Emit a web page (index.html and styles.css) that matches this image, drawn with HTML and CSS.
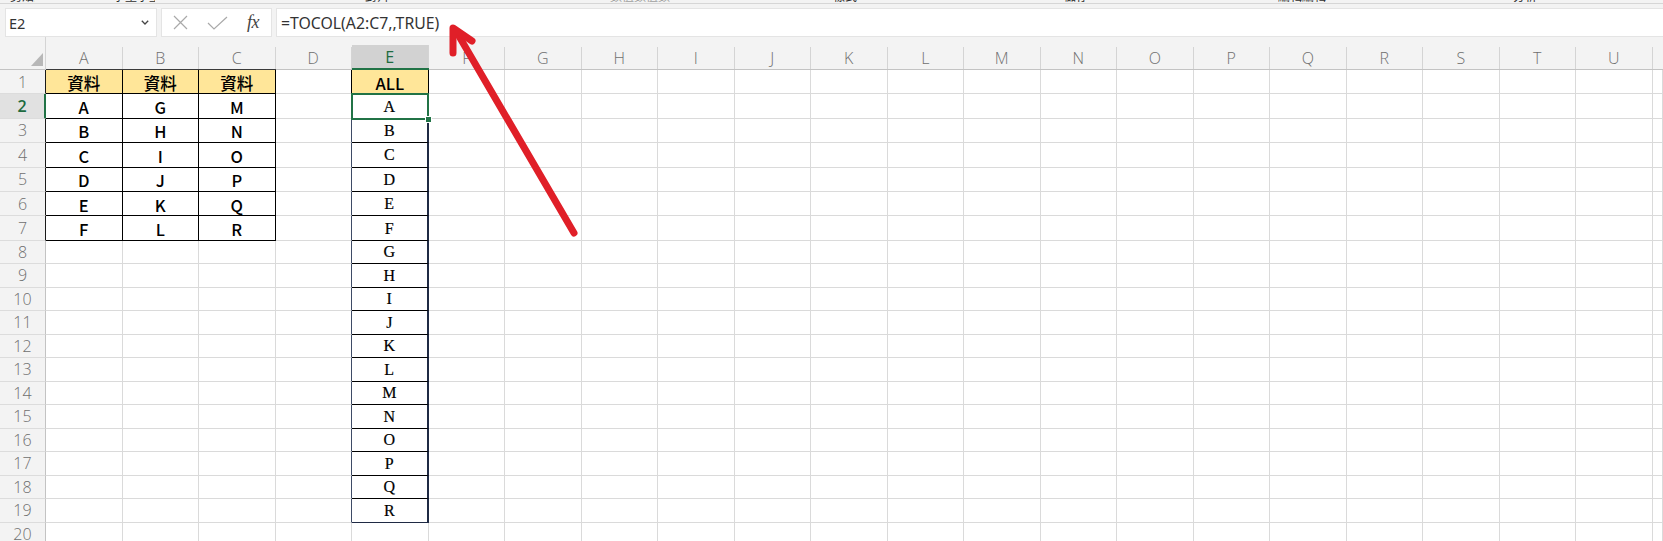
FILE: index.html
```html
<!DOCTYPE html>
<html lang="zh-Hant">
<head>
<meta charset="utf-8">
<title>TOCOL</title>
<link rel="stylesheet" href="styles.css">
</head>
<body>
<div class="app">
  <div class="ribbon">
    <span class="rg g1">剪貼簿</span>
    <span class="rg g2">字型字型</span>
    <span class="rg g3">對齊</span>
    <span class="rg g4 dim">數值數值數值</span>
    <span class="rg g5">樣式</span>
    <span class="rg g6">儲存</span>
    <span class="rg g7">編輯編輯</span>
    <span class="rg g8">分析</span>
  </div>
  <div class="fbar">
    <div class="namebox">
      <span>E2</span>
      <svg class="chev" width="8" height="5" viewBox="0 0 8 5"><path d="M0.8 0.8 L4 4 L7.2 0.8" fill="none" stroke="#444" stroke-width="1.3"/></svg>
    </div>
    <div class="fxbox">
      <svg class="ic" width="15" height="15" viewBox="0 0 15 15"><path d="M1 1 L14 14 M14 1 L1 14" stroke="#a9a9a9" stroke-width="1.2" fill="none"/></svg>
      <svg class="ic ok" width="21" height="14" viewBox="0 0 21 14"><path d="M1 7 L7 13 L20 1" stroke="#a9a9a9" stroke-width="1.2" fill="none"/></svg>
      <span class="fx">fx</span>
    </div>
    <div class="formula">=TOCOL(A2:C7,,TRUE)</div>
  </div>

  <div class="sheet">
    <div class="corner"><span class="tri"></span></div>
    <div class="ch tb"><span>A</span></div>
    <div class="ch tb"><span>B</span></div>
    <div class="ch tb"><span>C</span></div>
    <div class="ch"><span>D</span></div>
    <div class="ch act"><span>E</span></div>
    <div class="ch"><span>F</span></div>
    <div class="ch"><span>G</span></div>
    <div class="ch"><span>H</span></div>
    <div class="ch"><span>I</span></div>
    <div class="ch"><span>J</span></div>
    <div class="ch"><span>K</span></div>
    <div class="ch"><span>L</span></div>
    <div class="ch"><span>M</span></div>
    <div class="ch"><span>N</span></div>
    <div class="ch"><span>O</span></div>
    <div class="ch"><span>P</span></div>
    <div class="ch"><span>Q</span></div>
    <div class="ch"><span>R</span></div>
    <div class="ch"><span>S</span></div>
    <div class="ch"><span>T</span></div>
    <div class="ch"><span>U</span></div>
    <div class="ch last"><span></span></div>

    <!-- row 1 -->
    <div class="rh edge">1</div>
    <div class="c t y sa">資料</div><div class="c t y sa">資料</div><div class="c t y sa">資料</div>
    <div class="c bk"></div>
    <div class="c e1 y sa">ALL</div>
    <div class="c"></div><div class="c"></div><div class="c"></div><div class="c"></div><div class="c"></div><div class="c"></div><div class="c"></div><div class="c"></div><div class="c"></div><div class="c"></div><div class="c"></div><div class="c"></div><div class="c"></div><div class="c"></div><div class="c"></div><div class="c"></div><div class="c"></div>

    <!-- row 2 -->
    <div class="rh act">2</div>
    <div class="c t sa">A</div><div class="c t sa">G</div><div class="c t sa">M</div>
    <div class="c"></div>
    <div class="c e sel ser">A</div>
    <div class="c"></div><div class="c"></div><div class="c"></div><div class="c"></div><div class="c"></div><div class="c"></div><div class="c"></div><div class="c"></div><div class="c"></div><div class="c"></div><div class="c"></div><div class="c"></div><div class="c"></div><div class="c"></div><div class="c"></div><div class="c"></div><div class="c"></div>

    <!-- row 3 -->
    <div class="rh edge">3</div>
    <div class="c t sa">B</div><div class="c t sa">H</div><div class="c t sa">N</div>
    <div class="c sp"></div>
    <div class="c e ser">B</div>
    <div class="c"></div><div class="c"></div><div class="c"></div><div class="c"></div><div class="c"></div><div class="c"></div><div class="c"></div><div class="c"></div><div class="c"></div><div class="c"></div><div class="c"></div><div class="c"></div><div class="c"></div><div class="c"></div><div class="c"></div><div class="c"></div><div class="c"></div>

    <!-- row 4 -->
    <div class="rh edge">4</div>
    <div class="c t sa">C</div><div class="c t sa">I</div><div class="c t sa">O</div>
    <div class="c sp"></div>
    <div class="c e ser">C</div>
    <div class="c"></div><div class="c"></div><div class="c"></div><div class="c"></div><div class="c"></div><div class="c"></div><div class="c"></div><div class="c"></div><div class="c"></div><div class="c"></div><div class="c"></div><div class="c"></div><div class="c"></div><div class="c"></div><div class="c"></div><div class="c"></div><div class="c"></div>

    <!-- row 5 -->
    <div class="rh edge">5</div>
    <div class="c t sa">D</div><div class="c t sa">J</div><div class="c t sa">P</div>
    <div class="c sp"></div>
    <div class="c e ser">D</div>
    <div class="c"></div><div class="c"></div><div class="c"></div><div class="c"></div><div class="c"></div><div class="c"></div><div class="c"></div><div class="c"></div><div class="c"></div><div class="c"></div><div class="c"></div><div class="c"></div><div class="c"></div><div class="c"></div><div class="c"></div><div class="c"></div><div class="c"></div>

    <!-- row 6 -->
    <div class="rh edge">6</div>
    <div class="c t sa">E</div><div class="c t sa">K</div><div class="c t sa">Q</div>
    <div class="c sp"></div>
    <div class="c e ser">E</div>
    <div class="c"></div><div class="c"></div><div class="c"></div><div class="c"></div><div class="c"></div><div class="c"></div><div class="c"></div><div class="c"></div><div class="c"></div><div class="c"></div><div class="c"></div><div class="c"></div><div class="c"></div><div class="c"></div><div class="c"></div><div class="c"></div><div class="c"></div>

    <!-- row 7 -->
    <div class="rh edge">7</div>
    <div class="c t sa">F</div><div class="c t sa">L</div><div class="c t sa">R</div>
    <div class="c sp"></div>
    <div class="c e ser">F</div>
    <div class="c"></div><div class="c"></div><div class="c"></div><div class="c"></div><div class="c"></div><div class="c"></div><div class="c"></div><div class="c"></div><div class="c"></div><div class="c"></div><div class="c"></div><div class="c"></div><div class="c"></div><div class="c"></div><div class="c"></div><div class="c"></div><div class="c"></div>

    <!-- row 8 -->
    <div class="rh">8</div>
    <div class="c"></div><div class="c"></div><div class="c"></div>
    <div class="c sp"></div>
    <div class="c e ser">G</div>
    <div class="c"></div><div class="c"></div><div class="c"></div><div class="c"></div><div class="c"></div><div class="c"></div><div class="c"></div><div class="c"></div><div class="c"></div><div class="c"></div><div class="c"></div><div class="c"></div><div class="c"></div><div class="c"></div><div class="c"></div><div class="c"></div><div class="c"></div>

    <!-- row 9 -->
    <div class="rh">9</div>
    <div class="c"></div><div class="c"></div><div class="c"></div>
    <div class="c sp"></div>
    <div class="c e ser">H</div>
    <div class="c"></div><div class="c"></div><div class="c"></div><div class="c"></div><div class="c"></div><div class="c"></div><div class="c"></div><div class="c"></div><div class="c"></div><div class="c"></div><div class="c"></div><div class="c"></div><div class="c"></div><div class="c"></div><div class="c"></div><div class="c"></div><div class="c"></div>

    <!-- row 10 -->
    <div class="rh">10</div>
    <div class="c"></div><div class="c"></div><div class="c"></div>
    <div class="c sp"></div>
    <div class="c e ser">I</div>
    <div class="c"></div><div class="c"></div><div class="c"></div><div class="c"></div><div class="c"></div><div class="c"></div><div class="c"></div><div class="c"></div><div class="c"></div><div class="c"></div><div class="c"></div><div class="c"></div><div class="c"></div><div class="c"></div><div class="c"></div><div class="c"></div><div class="c"></div>

    <!-- row 11 -->
    <div class="rh">11</div>
    <div class="c"></div><div class="c"></div><div class="c"></div>
    <div class="c sp"></div>
    <div class="c e ser">J</div>
    <div class="c"></div><div class="c"></div><div class="c"></div><div class="c"></div><div class="c"></div><div class="c"></div><div class="c"></div><div class="c"></div><div class="c"></div><div class="c"></div><div class="c"></div><div class="c"></div><div class="c"></div><div class="c"></div><div class="c"></div><div class="c"></div><div class="c"></div>

    <!-- row 12 -->
    <div class="rh">12</div>
    <div class="c"></div><div class="c"></div><div class="c"></div>
    <div class="c sp"></div>
    <div class="c e ser">K</div>
    <div class="c"></div><div class="c"></div><div class="c"></div><div class="c"></div><div class="c"></div><div class="c"></div><div class="c"></div><div class="c"></div><div class="c"></div><div class="c"></div><div class="c"></div><div class="c"></div><div class="c"></div><div class="c"></div><div class="c"></div><div class="c"></div><div class="c"></div>

    <!-- row 13 -->
    <div class="rh">13</div>
    <div class="c"></div><div class="c"></div><div class="c"></div>
    <div class="c sp"></div>
    <div class="c e ser">L</div>
    <div class="c"></div><div class="c"></div><div class="c"></div><div class="c"></div><div class="c"></div><div class="c"></div><div class="c"></div><div class="c"></div><div class="c"></div><div class="c"></div><div class="c"></div><div class="c"></div><div class="c"></div><div class="c"></div><div class="c"></div><div class="c"></div><div class="c"></div>

    <!-- row 14 -->
    <div class="rh">14</div>
    <div class="c"></div><div class="c"></div><div class="c"></div>
    <div class="c sp"></div>
    <div class="c e ser">M</div>
    <div class="c"></div><div class="c"></div><div class="c"></div><div class="c"></div><div class="c"></div><div class="c"></div><div class="c"></div><div class="c"></div><div class="c"></div><div class="c"></div><div class="c"></div><div class="c"></div><div class="c"></div><div class="c"></div><div class="c"></div><div class="c"></div><div class="c"></div>

    <!-- row 15 -->
    <div class="rh">15</div>
    <div class="c"></div><div class="c"></div><div class="c"></div>
    <div class="c sp"></div>
    <div class="c e ser">N</div>
    <div class="c"></div><div class="c"></div><div class="c"></div><div class="c"></div><div class="c"></div><div class="c"></div><div class="c"></div><div class="c"></div><div class="c"></div><div class="c"></div><div class="c"></div><div class="c"></div><div class="c"></div><div class="c"></div><div class="c"></div><div class="c"></div><div class="c"></div>

    <!-- row 16 -->
    <div class="rh">16</div>
    <div class="c"></div><div class="c"></div><div class="c"></div>
    <div class="c sp"></div>
    <div class="c e ser">O</div>
    <div class="c"></div><div class="c"></div><div class="c"></div><div class="c"></div><div class="c"></div><div class="c"></div><div class="c"></div><div class="c"></div><div class="c"></div><div class="c"></div><div class="c"></div><div class="c"></div><div class="c"></div><div class="c"></div><div class="c"></div><div class="c"></div><div class="c"></div>

    <!-- row 17 -->
    <div class="rh">17</div>
    <div class="c"></div><div class="c"></div><div class="c"></div>
    <div class="c sp"></div>
    <div class="c e ser">P</div>
    <div class="c"></div><div class="c"></div><div class="c"></div><div class="c"></div><div class="c"></div><div class="c"></div><div class="c"></div><div class="c"></div><div class="c"></div><div class="c"></div><div class="c"></div><div class="c"></div><div class="c"></div><div class="c"></div><div class="c"></div><div class="c"></div><div class="c"></div>

    <!-- row 18 -->
    <div class="rh">18</div>
    <div class="c"></div><div class="c"></div><div class="c"></div>
    <div class="c sp"></div>
    <div class="c e ser">Q</div>
    <div class="c"></div><div class="c"></div><div class="c"></div><div class="c"></div><div class="c"></div><div class="c"></div><div class="c"></div><div class="c"></div><div class="c"></div><div class="c"></div><div class="c"></div><div class="c"></div><div class="c"></div><div class="c"></div><div class="c"></div><div class="c"></div><div class="c"></div>

    <!-- row 19 -->
    <div class="rh">19</div>
    <div class="c"></div><div class="c"></div><div class="c"></div>
    <div class="c sp"></div>
    <div class="c e end ser">R</div>
    <div class="c"></div><div class="c"></div><div class="c"></div><div class="c"></div><div class="c"></div><div class="c"></div><div class="c"></div><div class="c"></div><div class="c"></div><div class="c"></div><div class="c"></div><div class="c"></div><div class="c"></div><div class="c"></div><div class="c"></div><div class="c"></div><div class="c"></div>

    <!-- row 20 -->
    <div class="rh">20</div>
    <div class="c"></div><div class="c"></div><div class="c"></div><div class="c"></div><div class="c"></div>
    <div class="c"></div><div class="c"></div><div class="c"></div><div class="c"></div><div class="c"></div><div class="c"></div><div class="c"></div><div class="c"></div><div class="c"></div><div class="c"></div><div class="c"></div><div class="c"></div><div class="c"></div><div class="c"></div><div class="c"></div><div class="c"></div><div class="c"></div>
  </div>

  <svg class="arrow" width="1663" height="541" viewBox="0 0 1663 541">
    <g stroke="#e01f28" stroke-width="7" stroke-linecap="round" stroke-linejoin="round" fill="none">
      <path d="M574 233 L456 31"/>
      <path d="M453 53 L453 28 L472 41"/>
    </g>
  </svg>
</div>
</body>
</html>
```

FILE: styles.css
```css
html, body {
  margin: 0;
  padding: 0;
  background: #fff;
}

.app {
  position: relative;
  width: 1663px;
  height: 541px;
  overflow: hidden;
  background: #fff;
  font-family: "Noto Sans", "Open Sans", sans-serif;
}

/* ribbon remnant at the very top */
.ribbon {
  height: 3px;
  background: #f3f3f3;
  border-bottom: 1px solid #d6d6d6;
  display: flex;
  overflow: hidden;
}
.rg {
  flex: none;
  height: 14px;
  margin-top: -11px;
  font-family: "Noto Sans CJK TC", sans-serif;
  font-size: 12px;
  line-height: 14px;
  white-space: nowrap;
  overflow: hidden;
  color: #2e2e2e;
}
.rg.dim { color: #a0a0a0; }
.g1 { margin-left: 10px; width: 25px; }
.g2 { margin-left: 78px; width: 42px; }
.g3 { margin-left: 210px; width: 27px; }
.g4 { margin-left: 218px; width: 60px; }
.g5 { margin-left: 163px; width: 29px; }
.g6 { margin-left: 202px; width: 30px; }
.g7 { margin-left: 184px; width: 48px; }
.g8 { margin-left: 187px; width: 35px; }

/* formula bar */
.fbar {
  height: 33px;
  box-sizing: border-box;
  padding: 4px 0 0 5px;
  background: #f3f3f3;
  display: flex;
  gap: 4px;
}
.namebox, .fxbox, .formula {
  height: 29px;
  box-sizing: border-box;
  background: #fff;
  border: 1px solid #e4e4e4;
  display: flex;
  align-items: center;
}
.namebox {
  width: 152px;
  padding: 0 7px 0 3px;
  justify-content: space-between;
  font-size: 14.5px;
  color: #333;
}
.chev { display: block; }
.fxbox {
  width: 111px;
  padding-left: 11px;
}
.ic { display: block; flex: none; }
.ok { margin-left: 19px; }
.fx {
  margin-left: 19px;
  font-family: "Liberation Serif", serif;
  font-style: italic;
  font-size: 18px;
  color: #444;
  letter-spacing: -0.5px;
}
.formula {
  flex: 1;
  padding-left: 4px;
  border-right: none;
  font-size: 15.8px;
  color: #333;
}

/* sheet grid */
.sheet {
  display: grid;
  grid-template-columns: 46px repeat(21, 76.5px) 1fr;
  grid-template-rows: 33px repeat(7, 24.4px) repeat(12, 23.5px) 1fr;
  height: 504px;
}

.corner {
  background: #f3f3f3;
  border-bottom: 1px solid #c3c3c3;
  border-right: 1px solid #d4d4d4;
  box-sizing: border-box;
  display: flex;
  align-items: flex-end;
  justify-content: flex-end;
  padding: 0 2px 3px 0;
}
.tri {
  width: 12px;
  height: 13px;
  background: #b7b7b7;
  clip-path: polygon(100% 0, 100% 100%, 0 100%);
}

.ch {
  background: #f3f3f3;
  border-bottom: 1px solid #c3c3c3;
  box-sizing: border-box;
  display: flex;
  align-items: flex-end;
  font-family: "Open Sans", "Noto Sans", sans-serif;
  font-weight: 300;
  font-size: 16px;
  color: #6f6f6f;
}
.ch span {
  flex: 1;
  height: 22px;
  display: flex;
  align-items: center;
  justify-content: center;
  border-right: 1px solid #d4d4d4;
}
.ch.last span { border-right: none; }
.ch.tb { border-bottom-color: #3a3a3a; }
.ch.act { border-bottom: 2px solid #217346; }
.ch.act span {
  background: #d2d2d2;
  color: #1d6b3f;
  font-weight: 400;
  height: 23px;
}

.rh {
  background: #f3f3f3;
  border-right: 1px solid #c3c3c3;
  border-bottom: 1px solid #dcdcdc;
  box-sizing: border-box;
  display: flex;
  align-items: center;
  justify-content: center;
  font-family: "Open Sans", "Noto Sans", sans-serif;
  font-weight: 300;
  font-size: 16px;
  color: #6f6f6f;
}
.rh.edge { border-right-color: #1a1a1a; }
.rh.act {
  background: #e1e1e1;
  border-right: 2px solid #217346;
  color: #1d6b3f;
  font-weight: 600;
}

.c {
  border-right: 1px solid #dadada;
  border-bottom: 1px solid #dadada;
  box-sizing: border-box;
  display: flex;
  align-items: center;
  justify-content: center;
  color: #000;
  min-width: 0;
}
.y { background: #ffe699; }
.t {
  border-right-color: #000;
  border-bottom-color: #000;
}
.sa {
  font-family: "Noto Sans CJK TC", "Noto Sans", sans-serif;
  font-size: 16.5px;
  font-weight: 500;
  padding-top: 2px;
}
.ser {
  font-family: "Liberation Serif", serif;
  font-size: 16px;
  -webkit-text-stroke: 0.2px #000;
  padding-top: 1px;
}
.bk { border-right-color: #000; }
.sp { border-right-color: #3e4b66; }
.e1 {
  border-right-color: #000;
  border-bottom-color: #000;
}
.e {
  border-right: 2px solid #1f2a44;
  border-bottom-color: #000;
}
.e.end { border-bottom-color: #1f2a44; }

.sel { position: relative; }
.sel::after {
  content: "";
  position: absolute;
  left: -1px;
  top: -1px;
  right: -2px;
  bottom: -2px;
  border: 2px solid #217346;
}
.sel::before {
  content: "";
  position: absolute;
  right: -5px;
  bottom: -5px;
  width: 5px;
  height: 5px;
  background: #217346;
  border: 1px solid #fff;
  z-index: 1;
}

.arrow {
  position: absolute;
  left: 0;
  top: 0;
  pointer-events: none;
}
```
